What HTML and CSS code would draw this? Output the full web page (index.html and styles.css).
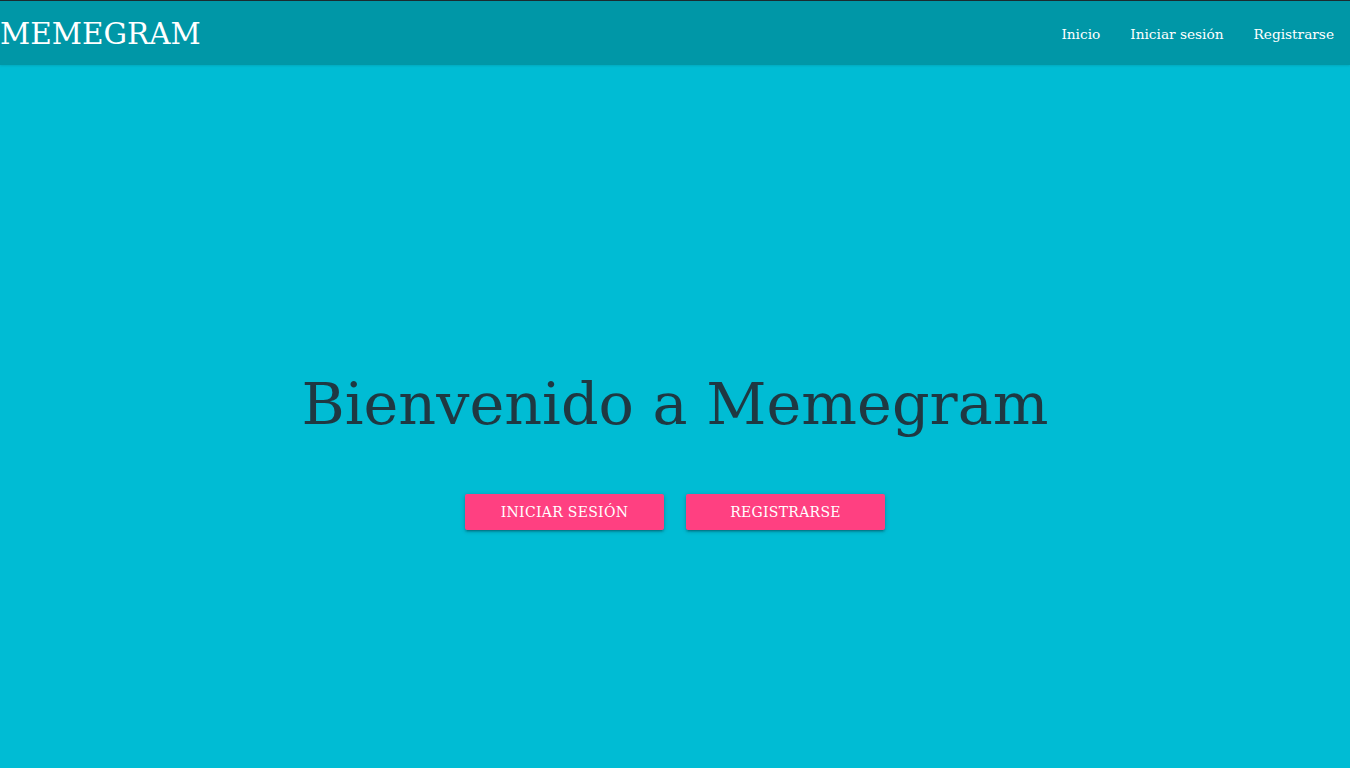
FILE: index.html
```html
<!DOCTYPE html>
<html lang="es">
<head>
<meta charset="utf-8">
<title>Memegram</title>
<link rel="stylesheet" href="styles.css">
</head>
<body>
<nav class="navbar">
  <a class="brand" href="#">MEMEGRAM</a>
  <ul class="nav-links">
    <li><a href="#">Inicio</a></li>
    <li><a href="#">Iniciar sesión</a></li>
    <li><a href="#">Registrarse</a></li>
  </ul>
</nav>
<main class="hero">
  <h1 class="title">Bienvenido a Memegram</h1>
  <div class="actions">
    <a class="btn" href="#">INICIAR SESIÓN</a>
    <a class="btn" href="#">REGISTRARSE</a>
  </div>
</main>
</body>
</html>
```
FILE: styles.css
```css
html, body {
  margin: 0;
  padding: 0;
  height: 100%;
}
body {
  background: #00bcd4;
  font-family: "DejaVu Serif", "Liberation Serif", serif;
  border-top: 1px solid #1b2b30;
  box-sizing: border-box;
}
.navbar {
  height: 64px;
  background: #0097a7;
  display: flex;
  align-items: center;
  justify-content: space-between;
  box-shadow: 0 1px 2px rgba(0,0,0,0.1);
}
.brand {
  color: #fff;
  text-decoration: none;
  font-size: 29.5px;
  padding-top: 1px;
}
.nav-links {
  list-style: none;
  margin: 0;
  padding: 1px 1px 0 0;
  display: flex;
}
.nav-links a {
  display: block;
  padding: 0 15px;
  color: #fff;
  text-decoration: none;
  font-size: 13.7px;
}
.hero {
  display: flex;
  flex-direction: column;
  align-items: center;
  padding-top: 299px;
}
.title {
  margin: 0;
  font-weight: normal;
  font-size: 58.8px;
  color: #1f3842;
  line-height: 80px;
}
.actions {
  margin-top: 50px;
  display: flex;
  gap: 22px;
}
.btn {
  width: 199px;
  height: 36px;
  display: flex;
  align-items: center;
  justify-content: center;
  background: #ff4081;
  color: #fff;
  text-decoration: none;
  font-size: 14px;
  letter-spacing: 0.3px;
  border-radius: 2px;
  box-shadow: 0 2px 2px rgba(0,0,0,0.14), 0 3px 1px -2px rgba(0,0,0,0.12), 0 1px 5px rgba(0,0,0,0.2);
}
```
